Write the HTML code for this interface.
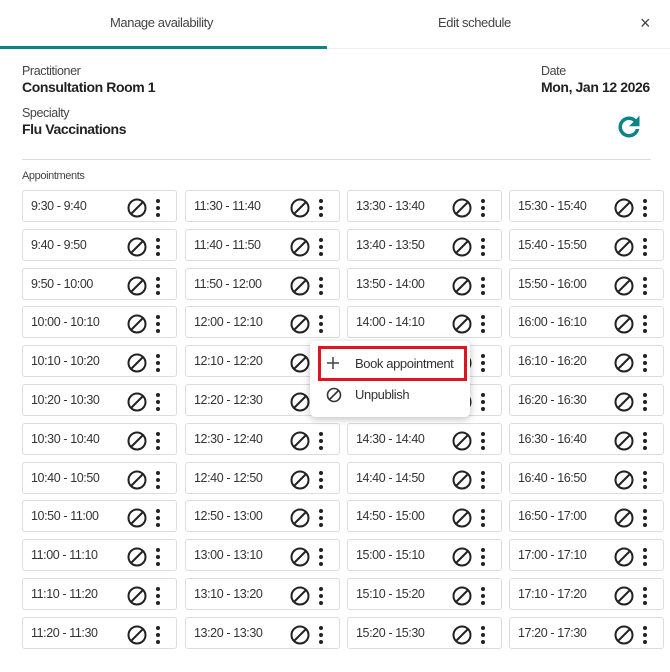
<!DOCTYPE html>
<html><head><style>
*{margin:0;padding:0;box-sizing:border-box}
body{width:670px;height:672px;background:#fff;font-family:"Liberation Sans",sans-serif;color:#222;position:relative;overflow:hidden;letter-spacing:-0.4px}
.a{position:absolute}
.tab{font-size:13px;color:#444;top:15px}
.cell{position:absolute;width:155px;height:32px;border:1px solid #ddd;border-radius:3px;font-size:12.5px;color:#333}
.cell span{position:absolute;left:8px;top:8px}
.cell svg{position:absolute;top:6px}
</style></head><body>
<div class="a tab" style="left:110px">Manage availability</div>
<div class="a tab" style="left:438px">Edit schedule</div>
<div class="a" style="left:640px;top:13px;font-size:18px;color:#444">×</div>
<div class="a" style="left:0;top:46px;width:327px;height:3px;background:#0c8388"></div>
<div class="a" style="left:327px;top:48px;width:343px;height:1px;background:#eee"></div>
<div class="a" style="left:22px;top:64px;font-size:12.5px;color:#444">Practitioner</div>
<div class="a" style="left:22px;top:79px;font-size:14px;font-weight:bold">Consultation Room 1</div>
<div class="a" style="left:22px;top:106px;font-size:12.5px;color:#444">Specialty</div>
<div class="a" style="left:22px;top:121px;font-size:14px;font-weight:bold">Flu Vaccinations</div>
<div class="a" style="left:541px;top:64px;font-size:12.5px;color:#444">Date</div>
<div class="a" style="left:541px;top:79px;font-size:14px;font-weight:bold">Mon, Jan 12 2026</div>
<svg class="a" style="left:614px;top:112px" width="30" height="30" viewBox="0 0 24 24"><path d="M17.65 6.35A7.96 7.96 0 0 0 12 4a8 8 0 1 0 7.73 10h-2.08A6 6 0 1 1 12 6c1.66 0 3.14.69 4.22 1.78L13 11h7V4l-2.35 2.35z" fill="#0c8388" stroke="#0c8388" stroke-width="0.8"/></svg>
<div class="a" style="left:22px;top:159px;width:629px;height:1px;background:#ddd"></div>
<div class="a" style="left:22px;top:170px;font-size:11px;color:#444">Appointments</div>
<div id="g"></div>
<div class="a" style="left:310px;top:341px;width:160px;height:76px;background:#fff;border-radius:5px;box-shadow:0 2px 8px rgba(0,0,0,.25)"></div>
<div class="a" style="left:318px;top:346px;width:149px;height:35px;border:3px solid #e0141e"></div>
<svg class="a" style="left:326px;top:356px" width="14" height="14" viewBox="0 0 14 14"><path d="M7 1V13M1 7H13" stroke="#444" stroke-width="1.5"/></svg>
<div class="a" style="left:355px;top:356px;font-size:13px;color:#333">Book appointment</div>
<svg class="a" style="left:326px;top:387px" width="16" height="16" viewBox="0 0 16 16"><circle cx="8" cy="8" r="6.5" fill="none" stroke="#333" stroke-width="1.6"/><path d="M3.5 12.5L12.5 3.5" stroke="#333" stroke-width="1.6"/></svg>
<div class="a" style="left:355px;top:387px;font-size:13px;color:#333">Unpublish</div>
<script>
var cols=[["9:30 - 9:40","9:40 - 9:50","9:50 - 10:00","10:00 - 10:10","10:10 - 10:20","10:20 - 10:30","10:30 - 10:40","10:40 - 10:50","10:50 - 11:00","11:00 - 11:10","11:10 - 11:20","11:20 - 11:30"],
["11:30 - 11:40","11:40 - 11:50","11:50 - 12:00","12:00 - 12:10","12:10 - 12:20","12:20 - 12:30","12:30 - 12:40","12:40 - 12:50","12:50 - 13:00","13:00 - 13:10","13:10 - 13:20","13:20 - 13:30"],
["13:30 - 13:40","13:40 - 13:50","13:50 - 14:00","14:00 - 14:10","14:10 - 14:20","14:20 - 14:30","14:30 - 14:40","14:40 - 14:50","14:50 - 15:00","15:00 - 15:10","15:10 - 15:20","15:20 - 15:30"],
["15:30 - 15:40","15:40 - 15:50","15:50 - 16:00","16:00 - 16:10","16:10 - 16:20","16:20 - 16:30","16:30 - 16:40","16:40 - 16:50","16:50 - 17:00","17:00 - 17:10","17:10 - 17:20","17:20 - 17:30"]];
var xs=[22,185,347,509],h="";
for(var c=0;c<4;c++)for(var r=0;r<12;r++){var y=Math.round(190+r*38.8);
h+='<div class="cell" style="left:'+xs[c]+'px;top:'+y+'px"><span>'+cols[c][r]+'</span><svg style="left:103px" width="22" height="22" viewBox="0 0 22 22"><circle cx="11" cy="11" r="8.5" fill="none" stroke="#222" stroke-width="2"/><path d="M5 17L17 5" stroke="#222" stroke-width="2"/></svg><svg style="left:130px" width="10" height="22" viewBox="0 0 10 22"><circle cx="5" cy="4" r="2" fill="#222"/><circle cx="5" cy="11" r="2" fill="#222"/><circle cx="5" cy="18" r="2" fill="#222"/></svg></div>';}
document.getElementById('g').innerHTML=h;
</script>
</body></html>
